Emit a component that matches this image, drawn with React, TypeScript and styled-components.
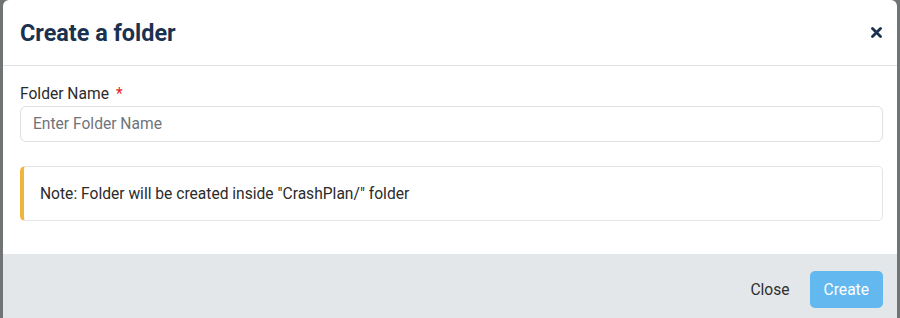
import React from 'react';
import styled, { createGlobalStyle } from 'styled-components';

const GlobalStyle = createGlobalStyle`
  html, body {
    margin: 0;
    padding: 0;
    background: #707474;
  }
  body {
    font-family: Roboto, "Liberation Sans", Arial, sans-serif;
  }
`;

const Backdrop = styled.div`
  width: 900px;
  height: 318px;
  padding: 0 3px;
  box-sizing: border-box;
  background: #707474;
  overflow: hidden;
`;

const Modal = styled.div`
  display: flex;
  flex-direction: column;
  background: #fff;
  border-radius: 6px 6px 0 0;
  height: 340px;
`;

const Header = styled.div`
  display: flex;
  align-items: center;
  justify-content: space-between;
  height: 65px;
  padding: 0 14px 0 17px;
  border-bottom: 1px solid #dee2e6;
`;

const Title = styled.h2`
  margin: 0;
  font-size: 23.4px;
  font-weight: 700;
  color: #1a3150;
`;

const CloseIcon = styled.button`
  border: 0;
  background: none;
  padding: 0;
  width: 14px;
  height: 14px;
  display: flex;
  align-items: center;
  justify-content: center;
  cursor: pointer;
`;

const Body = styled.div`
  padding: 18px 14px 33px 17px;
`;

const Label = styled.label`
  display: block;
  font-size: 15.6px;
  line-height: 20px;
  color: #2b2b2b;
  margin-bottom: 2px;
`;

const Required = styled.span`
  color: #e0261b;
  margin-left: 7px;
`;

const Input = styled.input`
  display: block;
  width: 100%;
  box-sizing: border-box;
  height: 36px;
  padding: 0 12px;
  border: 1px solid #dcdfe3;
  border-radius: 6px;
  font-family: inherit;
  font-size: 15.6px;
  color: #333;
  outline: none;

  &::placeholder {
    color: #6f747a;
  }
`;

const Note = styled.div`
  margin-top: 24px;
  height: 55px;
  box-sizing: border-box;
  display: flex;
  align-items: center;
  padding-left: 16px;
  border: 1px solid #e3e5e8;
  border-left: 4px solid #f0b63c;
  border-radius: 5px;
  font-size: 15.6px;
  color: #2b2b2b;
`;

const Footer = styled.div`
  flex: 1;
  display: flex;
  justify-content: flex-end;
  align-items: flex-start;
  gap: 6px;
  padding: 17px 14px 0 17px;
  background: #e4e7ea;
`;

const Button = styled.button<{ $primary?: boolean }>`
  height: 37px;
  padding: 0 14px;
  border: 0;
  border-radius: 5px;
  font-family: inherit;
  font-size: 15.6px;
  cursor: pointer;
  background: ${(p) => (p.$primary ? '#63b8ef' : 'transparent')};
  color: ${(p) => (p.$primary ? '#fff' : '#2f2f2f')};
`;

export default function App() {
  return (
    <>
      <GlobalStyle />
      <Backdrop>
        <Modal>
          <Header>
            <Title>Create a folder</Title>
            <CloseIcon aria-label="Close">
              <svg width="11" height="11" viewBox="0 0 11 11">
                <path
                  d="M1.5 1.5 L9.5 9.5 M9.5 1.5 L1.5 9.5"
                  stroke="#1a3150"
                  strokeWidth="2.8"
                  strokeLinecap="round"
                />
              </svg>
            </CloseIcon>
          </Header>
          <Body>
            <Label>
              Folder Name<Required>*</Required>
            </Label>
            <Input placeholder="Enter Folder Name" />
            <Note>Note: Folder will be created inside "CrashPlan/" folder</Note>
          </Body>
          <Footer>
            <Button>Close</Button>
            <Button $primary>Create</Button>
          </Footer>
        </Modal>
      </Backdrop>
    </>
  );
}
